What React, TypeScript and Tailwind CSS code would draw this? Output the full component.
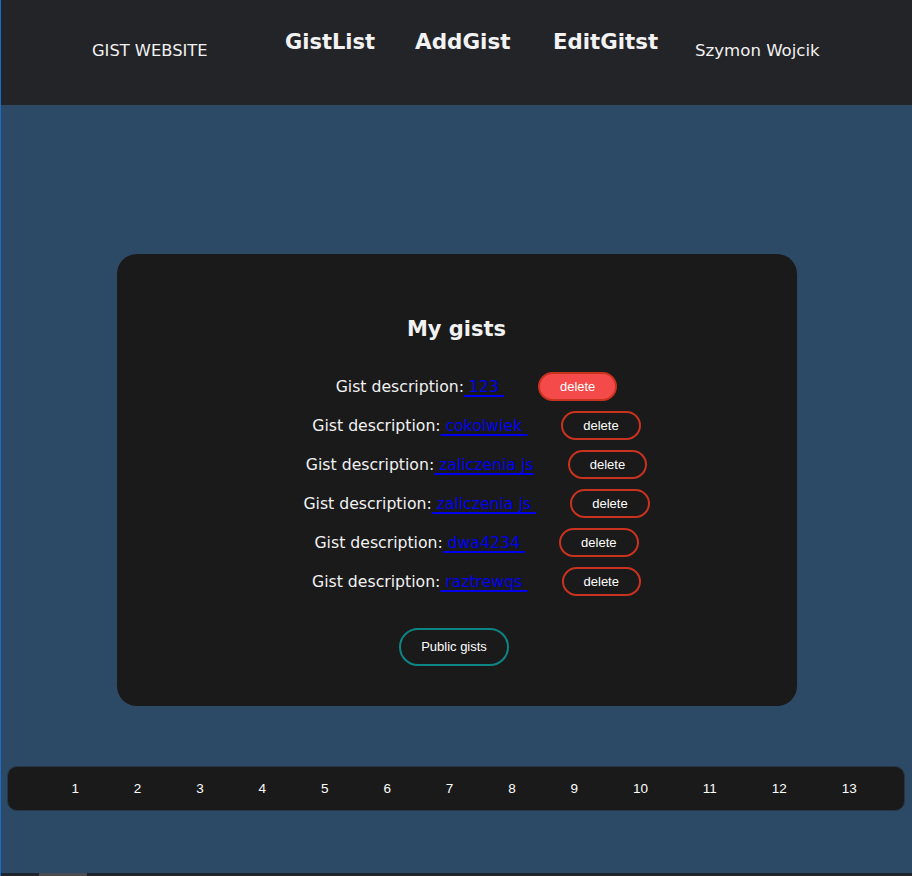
import React from "react";

const gists = [
  { link: " 123 ", filled: true },
  { link: " cokolwiek ", filled: false },
  { link: " zaliczenia js", filled: false },
  { link: " zaliczenia js ", filled: false },
  { link: " dwa4234 ", filled: false },
  { link: " raztrewqs ", filled: false },
];

const pages = ["1", "2", "3", "4", "5", "6", "7", "8", "9", "10", "11", "12", "13"];

export default function App() {
  const sans = { fontFamily: '"DejaVu Sans", sans-serif' };
  const arial = { fontFamily: '"Liberation Sans", Arial, sans-serif' };
  return (
    <div className="w-[912px] h-[876px] bg-[#2c4a66] border-l border-[#1b6cc6] flex flex-col overflow-hidden" style={sans}>
      {/* header */}
      <header className="h-[105px] shrink-0 bg-[#232428] flex items-start text-[#f2f2f2]">
        <div className="w-[91px] shrink-0" />
        <div className="w-[193px] shrink-0 mt-[40px] text-[16.3px] leading-[21px]">GIST WEBSITE</div>
        <div className="w-[130px] shrink-0 mt-[27px] text-[21px] leading-[30px] font-bold">GistList</div>
        <div className="w-[138px] shrink-0 mt-[27px] text-[21.5px] leading-[30px] font-bold">AddGist</div>
        <div className="w-[142px] shrink-0 mt-[27px] text-[21.3px] leading-[30px] font-bold">EditGitst</div>
        <div className="mt-[40px] text-[16.6px] leading-[21px]">Szymon Wojcik</div>
      </header>

      {/* card */}
      <div className="mt-[149px] mx-auto w-[680px] bg-[#1a1a1a] rounded-[20px] pt-[60px] pb-[40px] flex flex-col items-center text-[#f2f2f2]">
        <h1 className="text-[21px] leading-[30px] font-bold">My gists</h1>
        <ul className="mt-[23px] w-full pl-10">
          {gists.map((g, i) => (
            <li key={i} className="h-[39px] flex items-center justify-center">
              <span className="text-[15.7px] leading-[21px] whitespace-pre">
                Gist description:
                <a className="text-[#0000ee] underline decoration-[1.5px] underline-offset-[3px] whitespace-pre">{g.link}</a>
              </span>
              <button
                className={
                  g.filled
                    ? "ml-[34px] h-[29px] px-5 rounded-full border-2 border-[#c8321f] bg-[#f44a4a] text-white text-[13px] leading-[25px]"
                    : "ml-[34px] h-[29px] px-5 rounded-full border-2 border-[#c8321f] bg-transparent text-white text-[13px] leading-[25px]"
                }
                style={arial}
              >
                delete
              </button>
            </li>
          ))}
        </ul>
        <button
          className="mt-[27px] mr-[5px] h-[38px] px-5 rounded-full border-2 border-[#0e8585] text-white text-[13px] leading-[34px]"
          style={arial}
        >
          Public gists
        </button>
      </div>

      {/* pagination */}
      <div className="mt-[60px] ml-[6px] mr-[7px] h-[45px] bg-[#1a1a1a] rounded-[10px] border border-[#263646] flex items-center pl-[36px] text-white text-[13.5px]" style={arial}>
        {pages.map((p) => (
          <span key={p} className="px-[27.45px] leading-[20px] pt-[1px]">{p}</span>
        ))}
      </div>

      <div className="flex-1" />
      <div className="h-[3px] shrink-0 bg-[#1e252c] flex">
        <div className="ml-[38px] w-[48px] bg-[#4a4d50]" />
      </div>
    </div>
  );
}
